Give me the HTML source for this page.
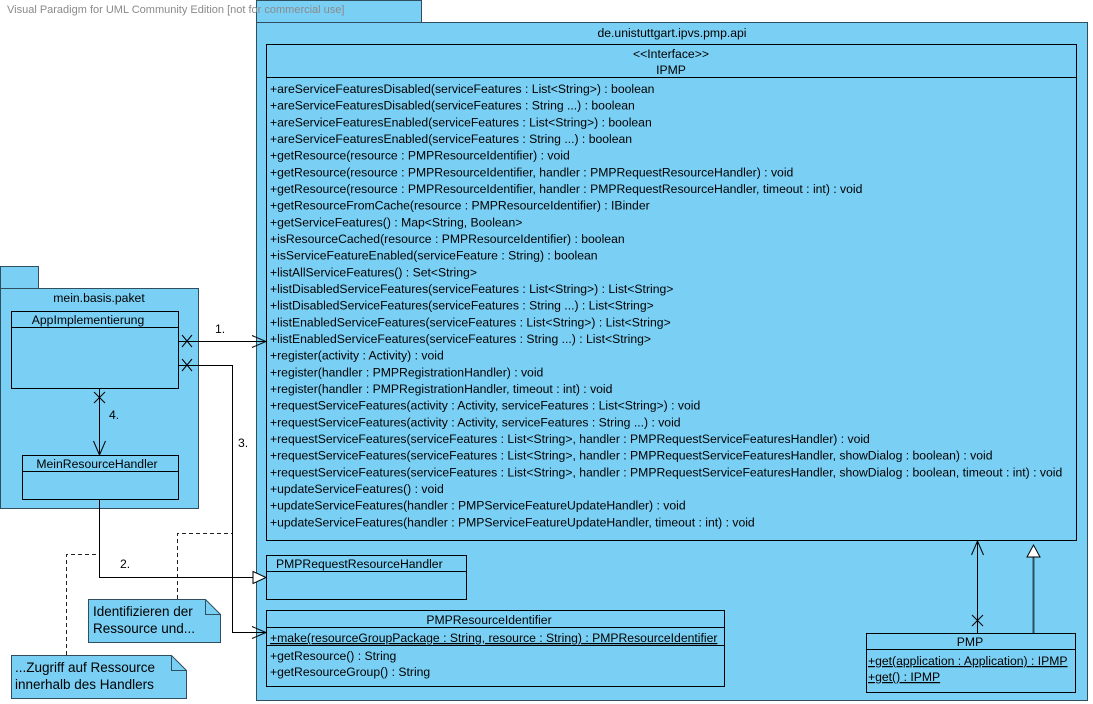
<!DOCTYPE html>
<html><head><meta charset="utf-8"><style>
html,body{margin:0;padding:0;background:#fff;width:1093px;height:704px;overflow:hidden}
svg{display:block}
text{font-family:"Liberation Sans",sans-serif;font-size:12.2px;fill:#000}
.n{font-size:13.5px}
</style></head><body>
<svg width="1093" height="704" xmlns="http://www.w3.org/2000/svg">
<g fill="#7acff4" stroke="#2f4f5f" stroke-width="1">
<rect x="256.5" y="0.5" width="165" height="22"/>
<rect x="256.5" y="22.5" width="831" height="678"/>
<rect x="0.5" y="266.5" width="38" height="22"/>
<rect x="0.5" y="288.5" width="198" height="220"/>
</g>
<text x="7" y="13" style="fill:#8a8a8a;font-size:11px">Visual Paradigm for UML Community Edition [not for commercial use]</text>
<text x="672" y="37" text-anchor="middle">de.unistuttgart.ipvs.pmp.api</text>
<text x="99" y="302" text-anchor="middle">mein.basis.paket</text>
<g fill="none" stroke="#000" stroke-width="1">
<rect x="266.5" y="44.5" width="810" height="496"/>
<line x1="266" y1="77.5" x2="1077" y2="77.5"/>
<rect x="11.5" y="311.5" width="167" height="77"/>
<line x1="11" y1="327.5" x2="178" y2="327.5"/>
<rect x="22.5" y="455.5" width="156" height="44"/>
<line x1="22" y1="471.5" x2="178" y2="471.5"/>
<rect x="266.5" y="555.5" width="200" height="44"/>
<line x1="266" y1="571.5" x2="466" y2="571.5"/>
<rect x="266.5" y="610.5" width="458" height="76"/>
<line x1="266" y1="627.5" x2="724" y2="627.5"/>
<line x1="266" y1="645.5" x2="724" y2="645.5"/>
<rect x="866.5" y="633.5" width="209" height="59"/>
<line x1="866" y1="649.5" x2="1075" y2="649.5"/>
</g>
<g fill="#7acff4" stroke="#2f4f5f">
<path d="M88.5 599.5H205.5L220.5 614.5V642.5H88.5Z"/>
<path d="M205.5 599.5V614.5H220.5" fill="none"/>
<path d="M11.5 655.5H171.5L186.5 670.5V698.5H11.5Z"/>
<path d="M171.5 655.5V670.5H186.5" fill="none"/>
</g>
<text class="n" x="93" y="616">Identifizieren der</text>
<text class="n" x="93" y="633">Ressource und...</text>
<text class="n" x="15" y="672">...Zugriff auf Ressource</text>
<text class="n" x="15" y="689">innerhalb des Handlers</text>
<g fill="none" stroke="#222" stroke-dasharray="4,3">
<path d="M177.5 599V533.5H232"/>
<path d="M66.5 655V554.5H99"/>
</g>
<g fill="none" stroke="#000">
<path d="M178 341.5H266M252 335.5L266 341.5L252 347.5"/>
<path d="M182 335L192 347M192 335L182 347"/>
<path d="M178 365.5H232.5V632.5H266M252 626.5L266 632.5L252 638.5"/>
<path d="M182 359L192 371M192 359L182 371"/>
<path d="M99.5 388V455M93.5 441L99.5 455L105.5 441"/>
<path d="M94 392L105 403M105 392L94 403"/>
<path d="M99.5 499V577.5H253"/>
<path d="M977.5 633V541M971.5 555L977.5 541L983.5 555"/>
<path d="M972 615L983 626M983 615L972 626"/>
</g>
<path d="M1033.5 633V557" stroke="#2f4f5f" stroke-width="2" fill="none"/>
<path d="M253 571.5L266 577.5L253 583.5Z" fill="#fff" stroke="#000"/>
<path d="M1027 557L1033.5 545L1040 557Z" fill="#fff" stroke="#000"/>
<text x="215" y="333">1.</text>
<text x="238" y="447">3.</text>
<text x="109" y="419">4.</text>
<text x="120" y="568">2.</text>
<text x="671" y="58" text-anchor="middle">&lt;&lt;Interface&gt;&gt;</text>
<text x="671" y="74" text-anchor="middle">IPMP</text>
<g>
<text x="270" y="93">+areServiceFeaturesDisabled(serviceFeatures : List&lt;String&gt;) : boolean</text>
<text x="270" y="109.6">+areServiceFeaturesDisabled(serviceFeatures : String ...) : boolean</text>
<text x="270" y="126.3">+areServiceFeaturesEnabled(serviceFeatures : List&lt;String&gt;) : boolean</text>
<text x="270" y="143">+areServiceFeaturesEnabled(serviceFeatures : String ...) : boolean</text>
<text x="270" y="159.6">+getResource(resource : PMPResourceIdentifier) : void</text>
<text x="270" y="176.3">+getResource(resource : PMPResourceIdentifier, handler : PMPRequestResourceHandler) : void</text>
<text x="270" y="193">+getResource(resource : PMPResourceIdentifier, handler : PMPRequestResourceHandler, timeout : int) : void</text>
<text x="270" y="209.6">+getResourceFromCache(resource : PMPResourceIdentifier) : IBinder</text>
<text x="270" y="226.3">+getServiceFeatures() : Map&lt;String, Boolean&gt;</text>
<text x="270" y="243">+isResourceCached(resource : PMPResourceIdentifier) : boolean</text>
<text x="270" y="259.6">+isServiceFeatureEnabled(serviceFeature : String) : boolean</text>
<text x="270" y="276.3">+listAllServiceFeatures() : Set&lt;String&gt;</text>
<text x="270" y="293">+listDisabledServiceFeatures(serviceFeatures : List&lt;String&gt;) : List&lt;String&gt;</text>
<text x="270" y="309.6">+listDisabledServiceFeatures(serviceFeatures : String ...) : List&lt;String&gt;</text>
<text x="270" y="326.3">+listEnabledServiceFeatures(serviceFeatures : List&lt;String&gt;) : List&lt;String&gt;</text>
<text x="270" y="343">+listEnabledServiceFeatures(serviceFeatures : String ...) : List&lt;String&gt;</text>
<text x="270" y="359.6">+register(activity : Activity) : void</text>
<text x="270" y="376.3">+register(handler : PMPRegistrationHandler) : void</text>
<text x="270" y="393">+register(handler : PMPRegistrationHandler, timeout : int) : void</text>
<text x="270" y="409.6">+requestServiceFeatures(activity : Activity, serviceFeatures : List&lt;String&gt;) : void</text>
<text x="270" y="426.3">+requestServiceFeatures(activity : Activity, serviceFeatures : String ...) : void</text>
<text x="270" y="443">+requestServiceFeatures(serviceFeatures : List&lt;String&gt;, handler : PMPRequestServiceFeaturesHandler) : void</text>
<text x="270" y="459.6">+requestServiceFeatures(serviceFeatures : List&lt;String&gt;, handler : PMPRequestServiceFeaturesHandler, showDialog : boolean) : void</text>
<text x="270" y="476.3">+requestServiceFeatures(serviceFeatures : List&lt;String&gt;, handler : PMPRequestServiceFeaturesHandler, showDialog : boolean, timeout : int) : void</text>
<text x="270" y="493">+updateServiceFeatures() : void</text>
<text x="270" y="509.6">+updateServiceFeatures(handler : PMPServiceFeatureUpdateHandler) : void</text>
<text x="270" y="526.3">+updateServiceFeatures(handler : PMPServiceFeatureUpdateHandler, timeout : int) : void</text>
</g>
<text x="88" y="324" text-anchor="middle">AppImplementierung</text>
<text x="97" y="468" text-anchor="middle">MeinResourceHandler</text>
<text x="276" y="568">PMPRequestResourceHandler</text>
<text x="489" y="624" text-anchor="middle">PMPResourceIdentifier</text>
<text x="270" y="642" text-decoration="underline">+make(resourceGroupPackage : String, resource : String) : PMPResourceIdentifier</text>
<text x="270" y="660">+getResource() : String</text>
<text x="270" y="676">+getResourceGroup() : String</text>
<text x="970" y="646" text-anchor="middle">PMP</text>
<text x="868" y="665" text-decoration="underline">+get(application : Application) : IPMP</text>
<text x="868" y="681" text-decoration="underline">+get() : IPMP</text>
</svg>
</body></html>
